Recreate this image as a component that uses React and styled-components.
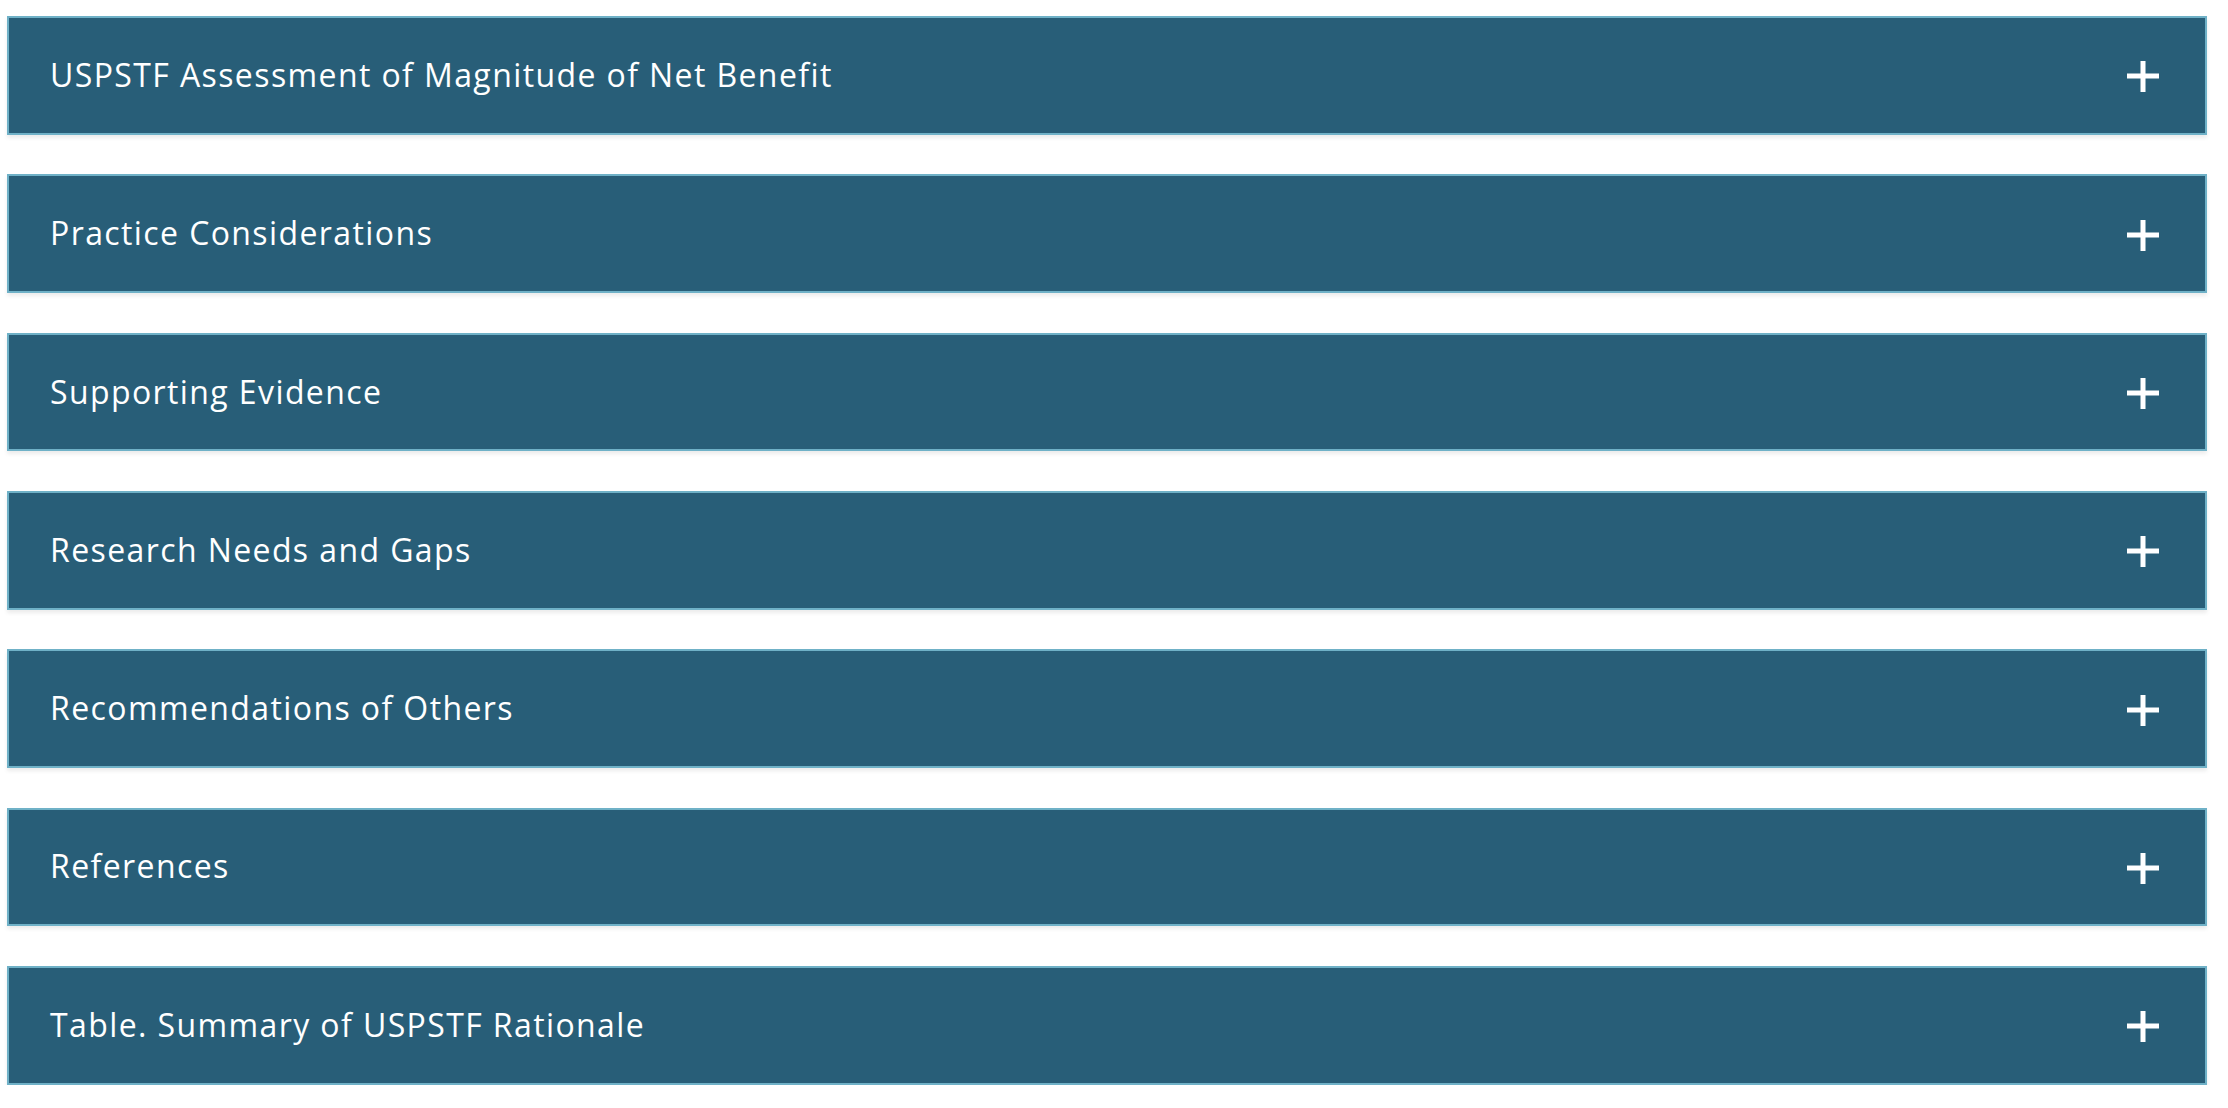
import styled, { createGlobalStyle } from "styled-components";

const sections = [
  "USPSTF Assessment of Magnitude of Net Benefit",
  "Practice Considerations",
  "Supporting Evidence",
  "Research Needs and Gaps",
  "Recommendations of Others",
  "References",
  "Table. Summary of USPSTF Rationale",
];

const GlobalStyle = createGlobalStyle`
  body {
    margin: 0;
    background: #ffffff;
    font-family: "Open Sans", "Liberation Sans", sans-serif;
  }
`;

const PlusIcon = () => (
  <svg width="32" height="32" viewBox="0 0 32 32" aria-hidden="true">
    <rect x="13.5" y="0" width="5" height="31" fill="#ffffff" />
    <rect x="0" y="12.5" width="32" height="5" fill="#ffffff" />
  </svg>
);

const App = () => {
  return (
    <Page>
      <GlobalStyle />
      {sections.map((title) => (
        <Panel key={title}>
          <Title>{title}</Title>
          <Toggle>
            <PlusIcon />
          </Toggle>
        </Panel>
      ))}
    </Page>
  );
};
export default App;

const Page = styled.div`
  display: flex;
  flex-direction: column;
  gap: 39.65px;
  padding: 16px 21px 0 7px;
`;
const Panel = styled.div`
  box-sizing: border-box;
  display: flex;
  justify-content: space-between;
  align-items: center;
  height: 118.7px;
  padding: 0 46px 0 41px;
  background-color: #285e78;
  border: 2px solid #6fb1c7;
  box-shadow: 0 3px 4px rgba(0, 0, 0, 0.08);
  cursor: pointer;
`;
const Title = styled.span`
  color: #ffffff;
  font-size: 32px;
  font-weight: 400;
  letter-spacing: 1.4px;
  margin-bottom: 2px;
`;
const Toggle = styled.span`
  display: flex;
  width: 32px;
  height: 32px;
  margin-top: 4px;
`;
